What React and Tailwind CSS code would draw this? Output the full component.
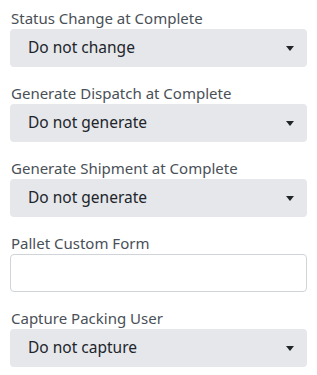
import React from 'react';

const fields = [
  { label: 'Status Change at Complete', value: 'Do not change', type: 'select' },
  { label: 'Generate Dispatch at Complete', value: 'Do not generate', type: 'select' },
  { label: 'Generate Shipment at Complete', value: 'Do not generate', type: 'select' },
  { label: 'Pallet Custom Form', value: '', type: 'input' },
  { label: 'Capture Packing User', value: 'Do not capture', type: 'select' },
];

function Caret() {
  return (
    <svg width="8" height="5" viewBox="0 0 8 5" className="shrink-0">
      <path d="M0 0h8L4 5z" fill="#212529" />
    </svg>
  );
}

export default function App() {
  return (
    <div
      className="w-[317px] h-[375px] bg-white pt-2 px-[10px] flex flex-col gap-4"
      style={{ fontFamily: '"Noto Sans", "Open Sans", sans-serif' }}
    >
      {fields.map((f) => (
        <div key={f.label} className="flex flex-col">
          <label className="text-[15px] leading-[21px] text-[#495057] pl-px">{f.label}</label>
          {f.type === 'select' ? (
            <div className="h-[38px] rounded bg-[#e5e7eb] flex items-center justify-between pl-[18px] pr-[13px]">
              <span className="text-[15.5px] text-[#212529]">{f.value}</span>
              <Caret />
            </div>
          ) : (
            <div className="h-[38px] rounded border border-[#ced4da] bg-white" />
          )}
        </div>
      ))}
    </div>
  );
}
